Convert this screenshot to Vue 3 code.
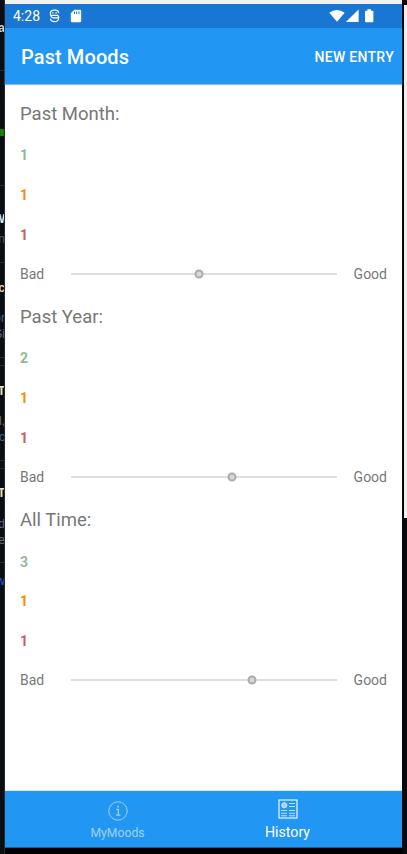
<script setup>
const sections = [
  { title: 'Past Month:', counts: [1, 1, 1], position: 48.2 },
  { title: 'Past Year:', counts: [2, 1, 1], position: 60.6 },
  { title: 'All Time:', counts: [3, 1, 1], position: 68.2 },
]
const tones = ['good', 'okay', 'bad']

const fragments = [
  { text: 'a', y: 20, color: '#c9d1d9', bold: true },
  { text: 'W', y: 211, color: '#dbe9f7', bold: true },
  { text: 'un', y: 231, color: '#59616b' },
  { text: 'ic', y: 280, color: '#e8c8c0', bold: true },
  { text: 'or', y: 310, color: '#39648d' },
  { text: 'Si', y: 326, color: '#69717a' },
  { text: 'T', y: 383, color: '#e8e2bd', bold: true },
  { text: 'd,', y: 413, color: '#6b7078' },
  { text: 'ic', y: 429, color: '#3f6b95' },
  { text: 'T', y: 485, color: '#e8e2bd', bold: true },
  { text: 'd', y: 516, color: '#6a6190' },
  { text: 'e', y: 532, color: '#69717a' },
  { text: 'w', y: 573, color: '#1f5fe0' },
]
const rules = [70, 185, 262, 357, 365, 460, 468, 562]
</script>

<template>
  <div class="desktop">
    <aside class="behind">
      <i v-for="y in rules" :key="y" class="rule" :style="{ top: y + 'px' }"></i>
      <i class="progress"></i>
      <span
        v-for="f in fragments"
        :key="f.y"
        class="fragment"
        :class="{ strong: f.bold }"
        :style="{ top: f.y + 'px', color: f.color }"
      >{{ f.text }}</span>
    </aside>

    <div class="phone">
      <header class="status">
        <span class="clock">4:28</span>
        <svg class="debug" width="11" height="14" viewBox="0 0 11 14" fill="none" stroke="#fff" stroke-width="1.2">
          <path d="M1.6 6.3C.6 2.8 2.4 1.2 4.4 1.2H6.6C8.6 1.2 9.6 2.4 9.6 4.2M1.4 6.4H8.3Q10 6.8 9.7 9.2Q9.2 12.6 5.5 12.6Q1.9 12.6 1.3 9.6M1.6 6.4Q2.6 8.7 4.6 8.8H9.7" />
          <path d="M3.2 3.9H4.6M6.4 3.9H7.8" />
        </svg>
        <svg class="card" width="12" height="14" viewBox="0 0 12 14">
          <path fill="#fff" fill-rule="evenodd" d="M4.3.8H10Q11.2.8 11.2 2V12Q11.2 13.2 10 13.2H2Q.8 13.2.8 12V4.3ZM4 2.6V5H5V2.6ZM6.2 2.6V5H7.2V2.6ZM8.5 2.6V5H9.5V2.6Z" />
        </svg>
        <svg class="signals" width="46" height="14" viewBox="0 0 46 14" fill="#fff">
          <path d="M.3 3.7Q7.8-1.6 15.7 3.7L8 12.8Z" />
          <path d="M16.8 13L29.6.4V13Z" />
          <path d="M38.4.3H42V1.7H43.4Q44.4 1.7 44.4 2.7V12.2Q44.4 13.3 43.4 13.3H37Q36 13.3 36 12.2V2.7Q36 1.7 37 1.7H38.4Z" />
        </svg>
      </header>

      <div class="toolbar">
        <h1>Past Moods</h1>
        <button>NEW ENTRY</button>
      </div>

      <main>
        <section v-for="s in sections" :key="s.title">
          <h2>{{ s.title }}</h2>
          <p v-for="(n, i) in s.counts" :key="i" :class="tones[i]">{{ n }}</p>
          <div class="scale">
            <span class="low">Bad</span>
            <div class="track">
              <i class="thumb" :style="{ left: s.position + '%' }"></i>
            </div>
            <span class="high">Good</span>
          </div>
        </section>
      </main>

      <nav>
        <a class="tab inactive">
          <svg width="20" height="20" viewBox="0 0 20 20" fill="none" stroke="#fff">
            <circle cx="10" cy="10" r="9.2" stroke-width="1" />
            <path d="M8.3 8.3H10.3V14M8 14.2H12.4" stroke-width="1.3" />
            <path d="M9.3 5.6H10.9" stroke-width="1.7" />
          </svg>
          <span>MyMoods</span>
        </a>
        <a class="tab active">
          <svg width="20" height="20" viewBox="0 0 20 20" fill="none" stroke="#fff">
            <rect x="1" y="1" width="18" height="18" stroke-width="1.1" />
            <circle cx="6.3" cy="6.3" r="2.7" fill="#fff" fill-opacity=".6" stroke-opacity=".5" />
            <path d="M11 4.5H17M11 7.5H17M3 11.5H9M11 11.5H17M3 14.3H9M11 14.3H17M3 16.8H9M11 16.8H17" stroke-opacity=".7" />
          </svg>
          <span>History</span>
        </a>
      </nav>
    </div>

    <aside class="edge"><i></i></aside>
  </div>
</template>

<style>
body { margin: 0; background: #080b10; }
</style>

<style scoped>
.desktop {
  display: grid;
  grid-template-columns: 5px 397px 5px;
  width: 407px;
  height: 854px;
  overflow: hidden;
  background: #000;
  font-family: Roboto, sans-serif;
}
.behind { position: relative; overflow: hidden; background: #0a0d12; border-right: 1px solid #25282d; box-sizing: border-box; }
.rule { position: absolute; left: 0; width: 5px; height: 1px; background: #292d33; }
.progress { position: absolute; left: 0; top: 129px; width: 5px; height: 7px; background: #138000; }
.fragment { position: absolute; right: -1px; font: 12px/16px "Liberation Sans", sans-serif; }
.strong { font-weight: 700; }

.phone { display: flex; flex-direction: column; box-sizing: border-box; padding-top: 4px; background: linear-gradient(#f1f1f1 4px, #000 4px); }
.status { flex: none; height: 24px; display: flex; align-items: center; box-sizing: border-box; padding: 0 27px 0 8px; background: #1976d2; color: #fff; }
.clock { width: 36px; font-size: 14px; }
.debug { margin-right: 10px; }
.signals { margin-left: auto; }
.toolbar { flex: none; height: 56px; display: flex; align-items: center; justify-content: space-between; padding: 2px 8px 0 16px; box-sizing: border-box; background: #2196f3; color: #fff; position: relative; box-shadow: 0 1px 1px #9db7dc; }
h1 { margin: 0; font-size: 20px; font-weight: 500; letter-spacing: .1px; }
button { padding: 0; border: 0; background: none; color: #fff; font: 500 14px Roboto, sans-serif; letter-spacing: .3px; }
main { flex: 1; min-height: 0; box-sizing: border-box; padding: 10px 15px 0; background: #fff; }
section { height: 203.2px; }
h2 { margin: 0 0 2.3px; height: 40px; line-height: 40px; font-size: 18.5px; font-weight: 400; color: #777; }
p { margin: 0; height: 39.7px; line-height: 39.7px; font-size: 14px; font-weight: 700; }
.good { color: #8fbc8f; }
.okay { color: #ff8c00; }
.bad { color: #cd5c5c; }
.scale { display: flex; align-items: center; height: 37px; color: #777; font-size: 14px; }
.low { width: 51px; }
.high { margin-left: auto; }
.track { width: 266px; height: 2px; background: #dedede; }
.thumb { position: absolute; top: 50%; width: 9px; height: 9px; box-sizing: border-box; border: 2px solid #aaa; border-radius: 50%; background: #d8d8d8; transform: translate(-50%, -50%); }
.track { position: relative; }

nav { flex: none; height: 57px; display: flex; justify-content: center; padding-right: 2px; background: #2196f3; margin-bottom: 6px; box-sizing: border-box; border-bottom: 1px solid #17619d; box-shadow: 0 -1px 0 #d9e8f5; position: relative; color: #fff; }
.tab { width: 170px; display: flex; flex-direction: column; align-items: center; box-sizing: border-box; }
.inactive { padding-top: 10px; opacity: .56; font-size: 12.2px; }
.inactive span { line-height: 16px; margin-top: 4px; }
.active { padding-top: 8px; font-size: 14.2px; }
.active span { line-height: 18px; margin-top: 4px; }
.edge { padding: 5px 0 0 1px; background: #07090d; }
.edge i { display: block; height: 513px; background: #f1eeec; border-left: 1px solid #000; box-sizing: border-box; }
</style>
